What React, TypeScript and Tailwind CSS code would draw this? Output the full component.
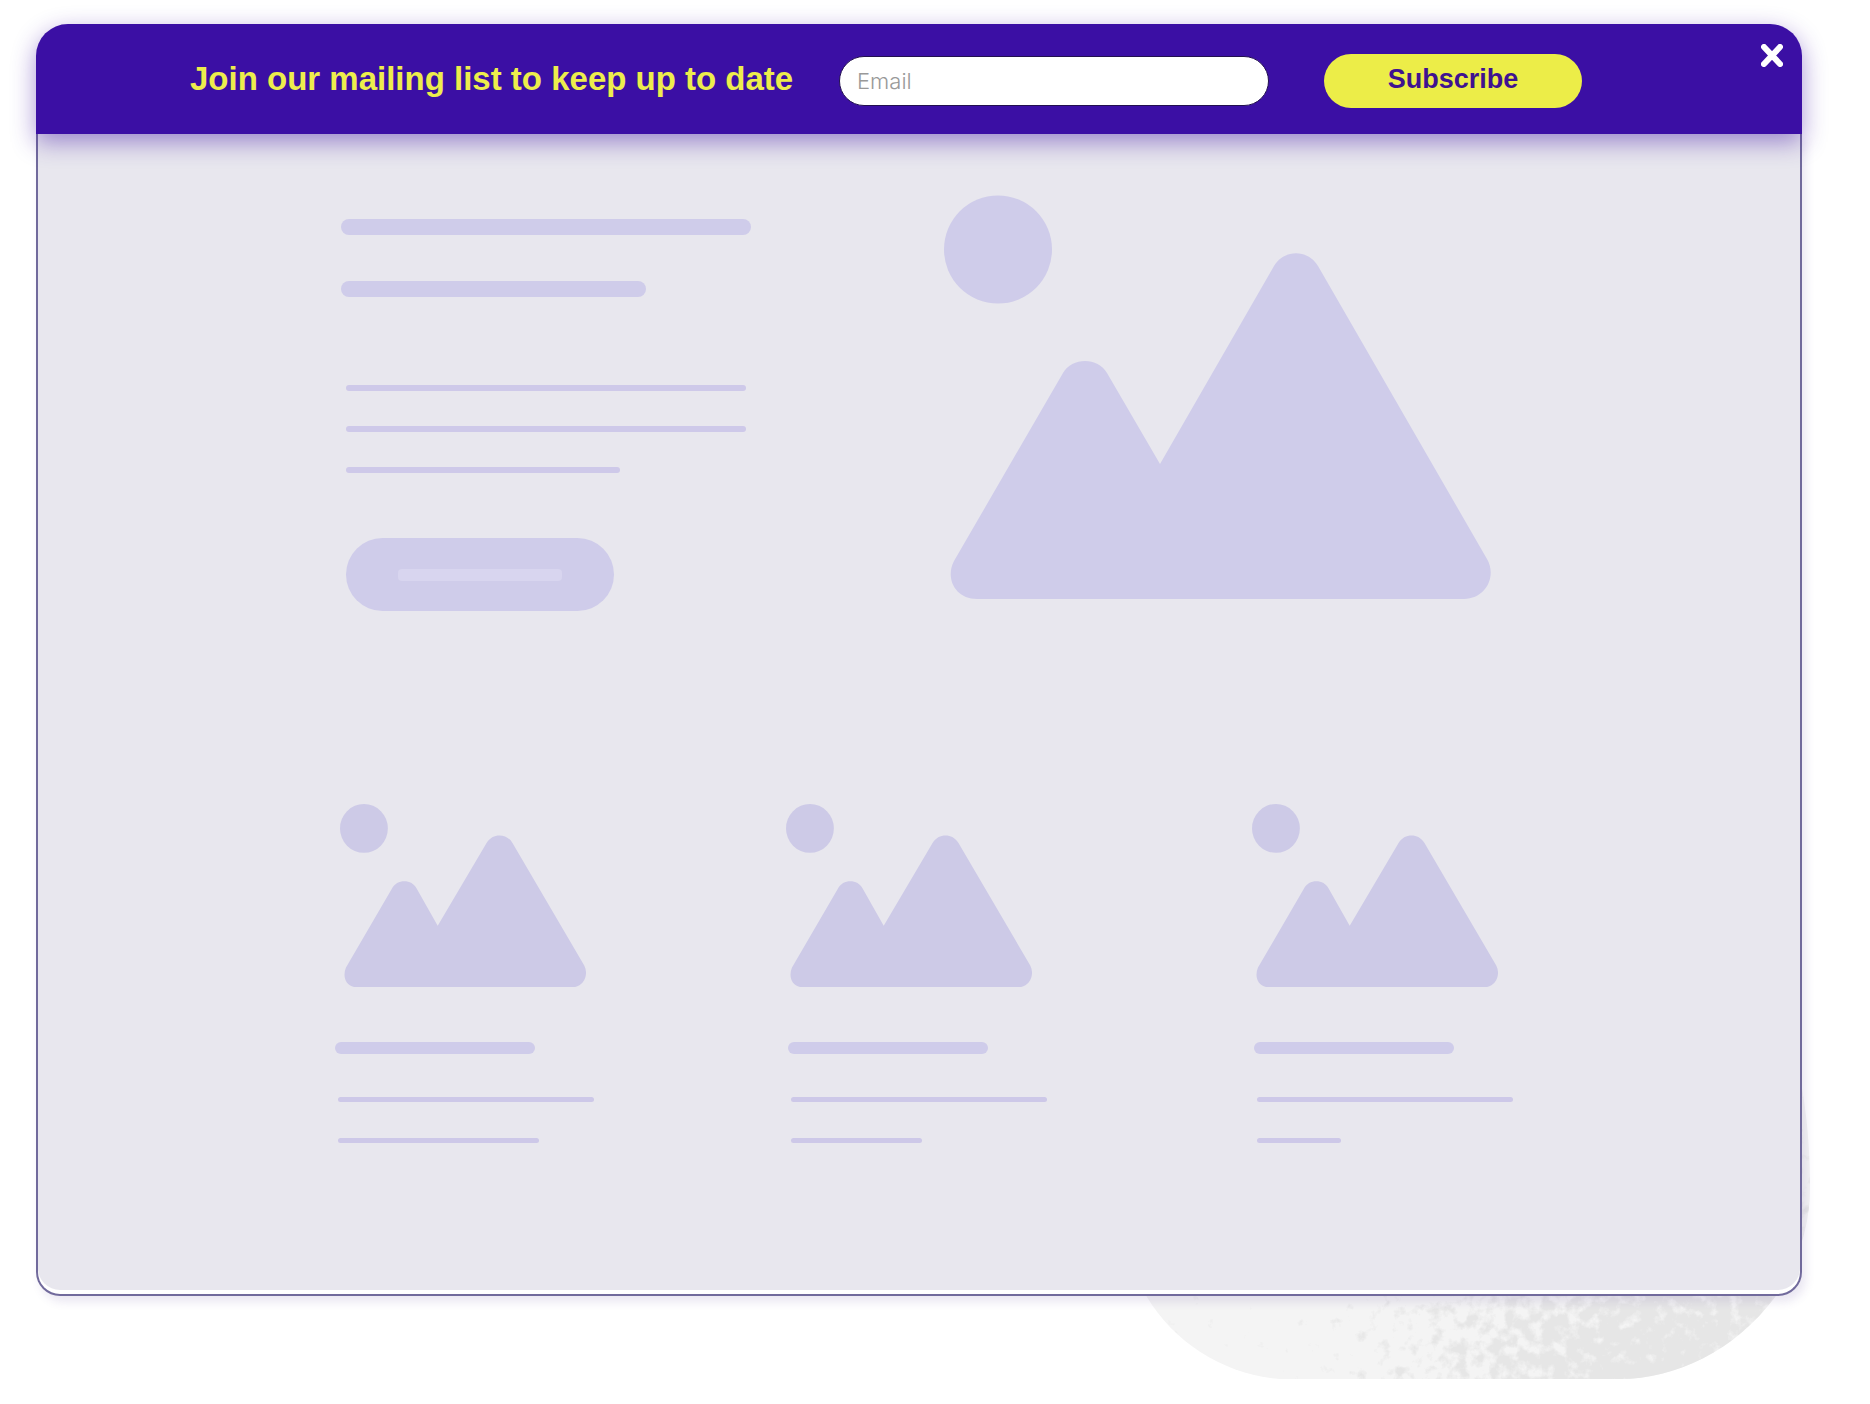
import React from "react";

function Landscape({ large = false }: { large?: boolean }) {
  return large ? (
    <svg viewBox="0 0 547 404" className="block w-full fill-[#cfccea]" aria-hidden="true">
      <circle cx="54" cy="54.5" r="54" />
      <path d="M119 178C128 162 154 162 163 178L216 269L330 71C340 54 364 54 374 71L543 364C553 381 542 404 520 404H33C11 404 1 383 10 366Z" />
    </svg>
  ) : (
    <svg viewBox="0 0 247 184" className="block w-[94%] fill-[#cdcae7]" aria-hidden="true">
      <ellipse cx="24" cy="24.5" rx="24" ry="24.5" />
      <path d="M52 85C57 75 72 75 77 85L98 122L147 39C153 29 167 29 173 39L245 162C250 172 244 184 232 184H18C6 184 2 173 6 164Z" />
    </svg>
  );
}

function Backdrop() {
  return (
    <svg
      viewBox="0 0 680 400"
      className="absolute -right-2 -bottom-[83px] w-[680px]"
      aria-hidden="true"
    >
      <defs>
        <clipPath id="blob">
          <path d="M0 0H640C668 70 680 130 680 210C680 250 665 290 645 318C605 372 545 400 490 400H150C96 396 45 365 17 318C5 296 0 270 0 240Z" />
        </clipPath>
        <radialGradient id="fade" gradientUnits="userSpaceOnUse" cx="550" cy="460" r="400">
          <stop offset="0" stopColor="#e5e5e5" stopOpacity="1" />
          <stop offset="0.4" stopColor="#e5e5e5" stopOpacity="0.72" />
          <stop offset="1" stopColor="#e5e5e5" stopOpacity="0.24" />
        </radialGradient>
        <filter id="grain" x="0" y="0" width="100%" height="100%" colorInterpolationFilters="sRGB">
          <feTurbulence type="fractalNoise" baseFrequency="0.08" numOctaves="4" seed="4" result="n" />
          <feComposite in="SourceGraphic" in2="n" operator="arithmetic" k2="0.5" k3="0.5" result="s" />
          <feComponentTransfer in="s" result="t">
            <feFuncA type="linear" slope="8" intercept="-4" />
          </feComponentTransfer>
          <feFlood floodColor="#e6e6e6" />
          <feComposite in2="t" operator="in" />
        </filter>
      </defs>
      <g clipPath="url(#blob)">
        <rect width="680" height="400" fill="#f4f4f4" />
        <rect width="680" height="400" fill="url(#fade)" filter="url(#grain)" />
      </g>
    </svg>
  );
}

function PlaceholderCard({ picture, short }: { picture: string; short: string }) {
  return (
    <article>
      <div className={picture}>
        <Landscape />
      </div>
      <div className="mt-[55px] ml-0.5 h-3 w-[76.5%] rounded-full bg-[#cfccea]" />
      <div className="mr-px ml-[5px] pt-[43px]">
        <div className="h-[5px] rounded-full bg-[#cdc8e8]" />
        <div className={"mt-9 h-[5px] rounded-full bg-[#cdc8e8] " + short} />
      </div>
    </article>
  );
}

export default function App() {
  return (
    <main className="min-h-screen bg-white pt-6 pr-[68px] pb-[108px] pl-9 font-['Liberation_Sans',sans-serif]">
      <div className="relative isolate">
        <Backdrop />
        <form
          onSubmit={(e) => e.preventDefault()}
          className="relative z-10 grid h-[110px] grid-cols-[154fr_649fr_430fr_55fr_258fr_220fr] items-center rounded-t-[32px] bg-[#3b0fa4] pt-1 shadow-[0_8px_24px_rgba(59,15,164,0.45)]"
        >
          <label
            htmlFor="email"
            className="col-start-2 pb-1 text-[33px] leading-10 font-bold whitespace-nowrap text-[#eded4c]"
          >
            Join our mailing list to keep up to date
          </label>
          <input
            id="email"
            type="email"
            placeholder="Email"
            className="col-start-3 h-[50px] w-full rounded-full border border-[#22104f] bg-white px-[17px] font-['Inter',sans-serif] text-[22px] font-light outline-none placeholder:text-[#999999]"
          />
          <button
            type="submit"
            className="col-start-5 h-[54px] w-full rounded-full bg-[#eced48] pb-1 text-[27px] font-bold text-[#3f1290]"
          >
            Subscribe
          </button>
          <button type="button" aria-label="Close" className="absolute top-5 right-[19px]">
            <svg viewBox="0 0 22 23" className="block w-[22px]" aria-hidden="true">
              <path d="M3 3L19 20M19 3L3 20" fill="none" stroke="#fff" strokeWidth="6" strokeLinecap="round" />
            </svg>
          </button>
        </form>

        <div className="relative rounded-b-3xl border-2 border-t-0 border-[#716a9c] bg-white pb-1 shadow-[4px_6px_10px_rgba(80,60,150,0.12)]">
          <div className="rounded-b-[22px] bg-[#e8e7ee] pt-[61px] pb-[147px]">
            <section className="grid grid-cols-[303fr_410fr_193fr_547fr_309fr] items-start">
              <div className="col-start-2 pt-6">
                <div className="h-4 rounded-full bg-[#cfccea]" />
                <div className="mt-[46px] h-4 w-[74.5%] rounded-full bg-[#cfccea]" />
                <div className="mx-[5px] pt-[88px]">
                  <div className="h-[6px] rounded-full bg-[#cec9e9]" />
                  <div className="mt-[35px] h-[6px] rounded-full bg-[#cec9e9]" />
                  <div className="mt-[35px] h-[6px] w-[68.5%] rounded-full bg-[#cec9e9]" />
                  <div className="mt-[65px] flex h-[73px] w-[67%] items-center justify-center rounded-full bg-[#cfccea]">
                    <div className="h-3 w-[61%] rounded bg-[#d8d5ef]" />
                  </div>
                </div>
              </div>
              <div className="col-start-4">
                <Landscape large />
              </div>
            </section>
            <section className="mt-[193px] grid grid-cols-[295fr_262fr_191fr_262fr_204fr_262fr_286fr]">
              <div className="col-start-2">
                <PlaceholderCard picture="-mr-[7px] ml-[7px]" short="w-[78.5%]" />
              </div>
              <div className="col-start-4">
                <PlaceholderCard picture="mx-0" short="w-[51%]" />
              </div>
              <div className="col-start-6">
                <PlaceholderCard picture="mx-0" short="w-[33%]" />
              </div>
            </section>
          </div>
        </div>
      </div>
    </main>
  );
}
